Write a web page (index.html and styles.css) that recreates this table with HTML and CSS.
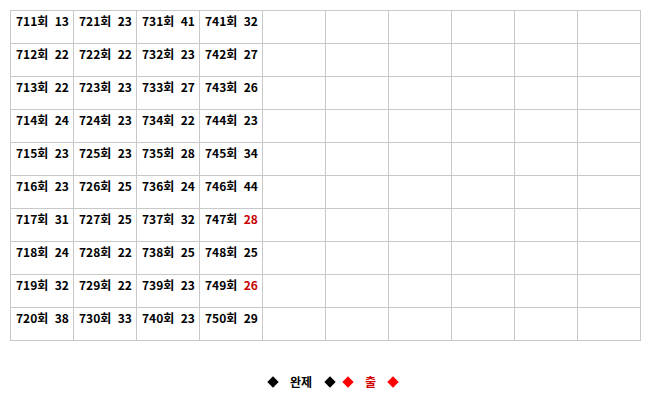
FILE: index.html
```html
<!DOCTYPE html>
<html lang="ko">
<head>
<meta charset="utf-8">
<link rel="stylesheet" href="styles.css">
</head>
<body>
<div class="board">
  <div class="cell">711회 13</div><div class="cell">721회 23</div><div class="cell">731회 41</div><div class="cell">741회 32</div><div class="cell"></div><div class="cell"></div><div class="cell"></div><div class="cell"></div><div class="cell"></div><div class="cell"></div>
  <div class="cell">712회 22</div><div class="cell">722회 22</div><div class="cell">732회 23</div><div class="cell">742회 27</div><div class="cell"></div><div class="cell"></div><div class="cell"></div><div class="cell"></div><div class="cell"></div><div class="cell"></div>
  <div class="cell">713회 22</div><div class="cell">723회 23</div><div class="cell">733회 27</div><div class="cell">743회 26</div><div class="cell"></div><div class="cell"></div><div class="cell"></div><div class="cell"></div><div class="cell"></div><div class="cell"></div>
  <div class="cell">714회 24</div><div class="cell">724회 23</div><div class="cell">734회 22</div><div class="cell">744회 23</div><div class="cell"></div><div class="cell"></div><div class="cell"></div><div class="cell"></div><div class="cell"></div><div class="cell"></div>
  <div class="cell">715회 23</div><div class="cell">725회 23</div><div class="cell">735회 28</div><div class="cell">745회 34</div><div class="cell"></div><div class="cell"></div><div class="cell"></div><div class="cell"></div><div class="cell"></div><div class="cell"></div>
  <div class="cell">716회 23</div><div class="cell">726회 25</div><div class="cell">736회 24</div><div class="cell">746회 44</div><div class="cell"></div><div class="cell"></div><div class="cell"></div><div class="cell"></div><div class="cell"></div><div class="cell"></div>
  <div class="cell">717회 31</div><div class="cell">727회 25</div><div class="cell">737회 32</div><div class="cell">747회 <span class="hit">28</span></div><div class="cell"></div><div class="cell"></div><div class="cell"></div><div class="cell"></div><div class="cell"></div><div class="cell"></div>
  <div class="cell">718회 24</div><div class="cell">728회 22</div><div class="cell">738회 25</div><div class="cell">748회 25</div><div class="cell"></div><div class="cell"></div><div class="cell"></div><div class="cell"></div><div class="cell"></div><div class="cell"></div>
  <div class="cell">719회 32</div><div class="cell">729회 22</div><div class="cell">739회 23</div><div class="cell">749회 <span class="hit">26</span></div><div class="cell"></div><div class="cell"></div><div class="cell"></div><div class="cell"></div><div class="cell"></div><div class="cell"></div>
  <div class="cell">720회 38</div><div class="cell">730회 33</div><div class="cell">740회 23</div><div class="cell">750회 29</div><div class="cell"></div><div class="cell"></div><div class="cell"></div><div class="cell"></div><div class="cell"></div><div class="cell"></div>
</div>
<div class="legend">
  <span class="dia"></span>
  <span class="label gap-l">완제</span>
  <span class="dia gap-l2"></span>
  <span class="dia red gap-s"></span>
  <span class="label out gap-l">출</span>
  <span class="dia red gap-l"></span>
</div>
</body>
</html>
```
FILE: styles.css
```css
html, body {
  margin: 0;
  padding: 0;
  background: #fff;
}
body {
  padding: 10px;
  font-family: "Noto Sans CJK KR", "DejaVu Sans", sans-serif;
  font-size: 12px;
  font-weight: bold;
  color: #000;
}
.board {
  display: grid;
  grid-template-columns: repeat(10, 62px);
  grid-auto-rows: 32px;
  gap: 1px;
  padding: 1px;
  background: #c8c8c8;
  width: max-content;
}
.cell {
  background: #fff;
  padding: 1px 0 0 5px;
  line-height: 18px;
  white-space: pre;
  word-spacing: 3px;
}
.hit {
  color: #c80000;
}
.legend {
  display: flex;
  align-items: center;
  height: 20px;
  margin-top: 31px;
  padding-left: 259px;
}
.dia {
  width: 8px;
  height: 8px;
  background: #000;
  transform: rotate(45deg);
  flex: none;
}
.dia.red {
  background: #ff0000;
}
.label {
  line-height: 20px;
}
.out {
  color: #d00000;
}
.gap-l {
  margin-left: 13px;
}
.gap-l2 {
  margin-left: 14px;
}
.gap-s {
  margin-left: 10px;
}
```
